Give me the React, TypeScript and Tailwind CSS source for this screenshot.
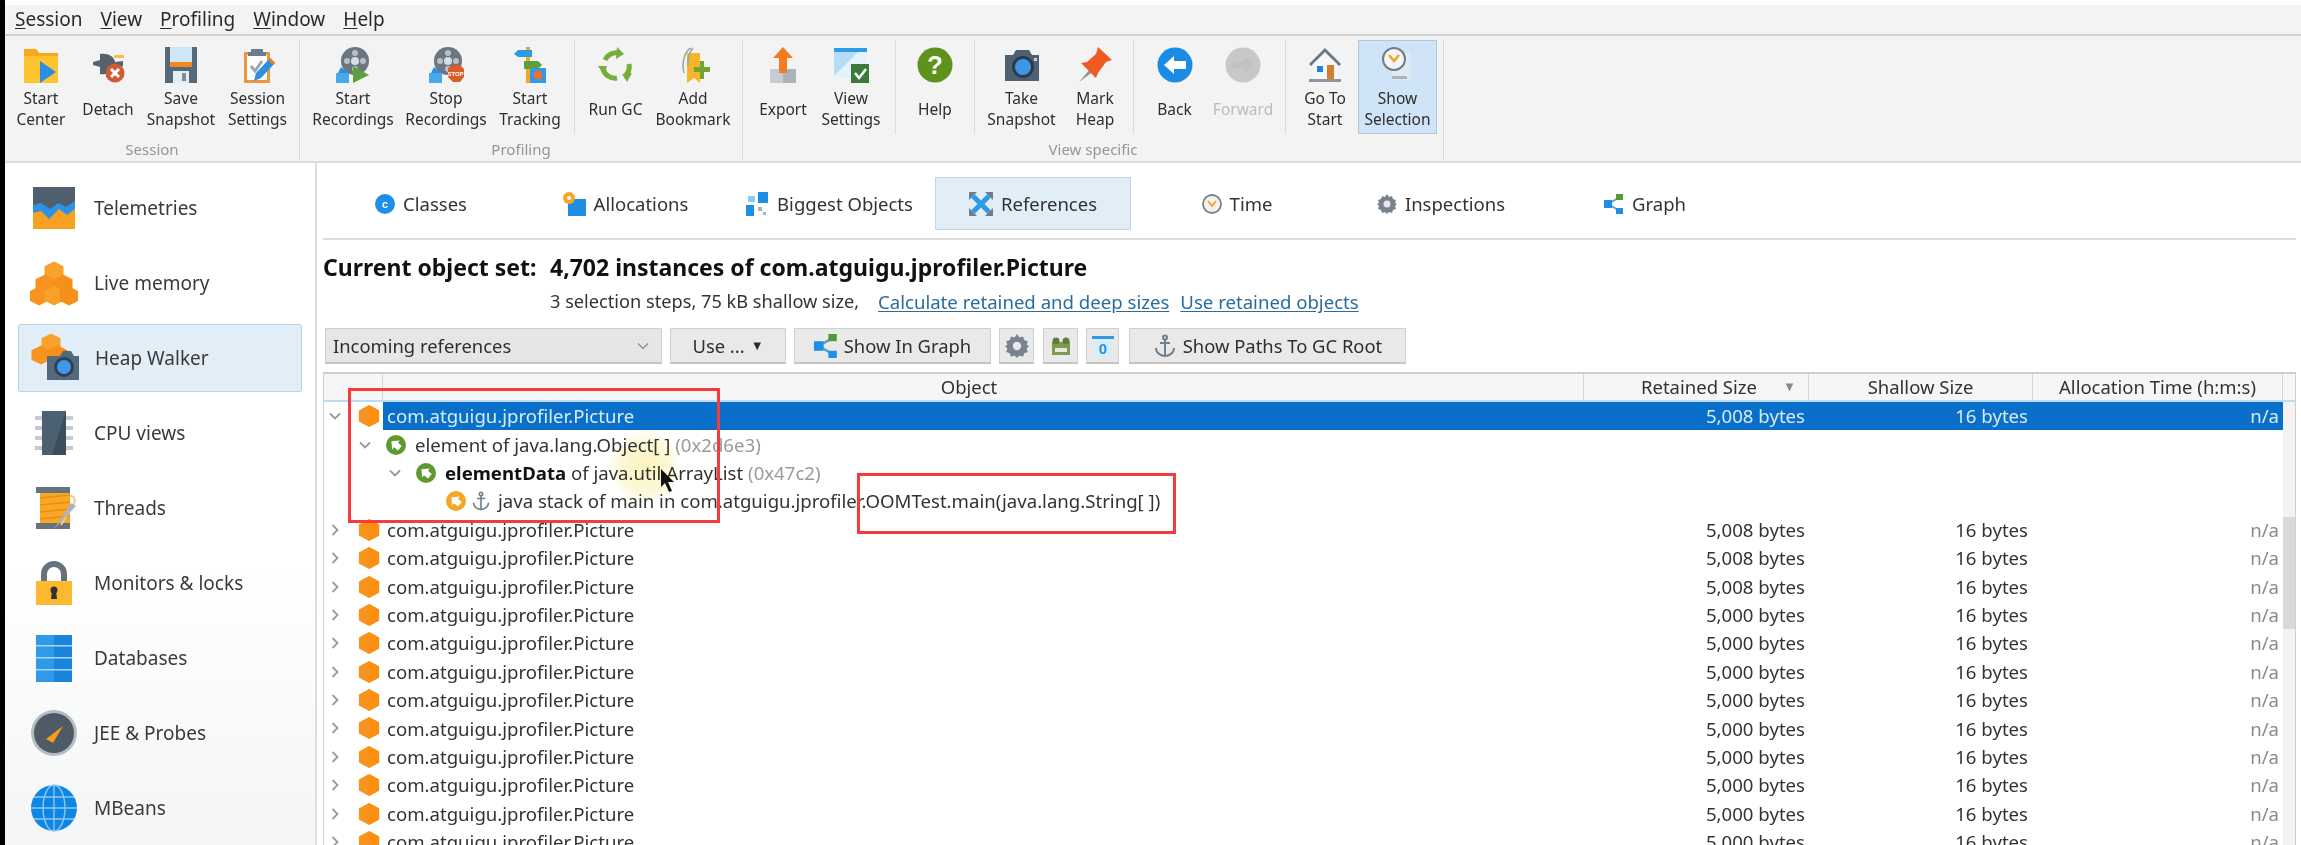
import React from "react";

type P = { className?: string };
const S = ({ className = "w-9 h-9", v = 36, children }: { className?: string; v?: number; children: React.ReactNode }) => (
  <svg viewBox={`0 0 ${v} ${v}`} className={className + " shrink-0"}>{children}</svg>
);

/* ---------- toolbar icons ---------- */
const StartCenter = () => (
  <S>
    <path d="M1 2h12l3 4h19v30H1z" fill="#fdc42f" />
    <path d="M1 2h12l3 4h19v3H1z" fill="#f7a71c" />
    <path d="M17 14l16 11-16 11z" fill="#2a8fe2" />
  </S>
);
const Detach = () => (
  <S>
    <path d="M3 15l7-2V7c8-1 14 2 15 8l8-1v5l-8 1c-1 5-7 8-15 7v-7l-7-2z" fill="#56636f" />
    <path d="M24 8h10v3H24z" fill="#f5c04a" />
    <circle cx="25" cy="26" r="9.5" fill="#cf5b32" />
    <path d="M21 22l8 8M29 22l-8 8" stroke="#fff" strokeWidth="3" />
  </S>
);
const Save = () => (
  <S>
    <path d="M2 0h32v36H2z" fill="#54697c" />
    <path d="M7 0h22v17H7z" fill="#cfe6f8" />
    <path d="M7 15h22v5H7z" fill="#f08a1d" />
    <path d="M10 24h16v12H10z" fill="#e6edf2" />
    <path d="M19 26h4v8h-4z" fill="#7d8d9b" />
  </S>
);
const SessionSettings = () => (
  <S>
    <path d="M4 5h26v31H4z" fill="#e8973e" />
    <path d="M7 8h20v25H7z" fill="#fff" />
    <path d="M11 2h12v3h3v4H8V5h3z" fill="#6b7c8c" />
    <path d="M11 19l4 5 7-10" stroke="#9aa5ae" strokeWidth="3" fill="none" />
    <path d="M30 11l5 5-14 15-7 3 2-8z" fill="#2a8fe2" />
    <path d="M30 11l5 5-2 2-5-5z" fill="#ef7b2a" />
  </S>
);
const Reel = ({ children }: { children: React.ReactNode }) => (
  <S>
    <circle cx="20" cy="14" r="14" fill="#6c7680" />
    <circle cx="20" cy="14" r="4" fill="#d7dde2" />
    <circle cx="20" cy="6" r="3" fill="#b8c0c7" />
    <circle cx="20" cy="22" r="3" fill="#b8c0c7" />
    <circle cx="12" cy="14" r="3" fill="#b8c0c7" />
    <circle cx="28" cy="14" r="3" fill="#b8c0c7" />
    <path d="M1 26h13v10H1z" fill="#4aa8ea" />
    <path d="M6 20l7 6H3z" fill="#2a8fe2" />
    {children}
  </S>
);
const Tracking = () => (
  <S>
    <path d="M14 0h4v36h-4z" fill="#f4a626" />
    <path d="M2 7l4-4h14v7H6z" fill="#2f9ae8" />
    <path d="M12 14h14l4 4-4 4H12z" fill="#5d9f3a" />
    <path d="M18 21h16v15H18z" fill="#2f9ae8" />
    <circle cx="26" cy="28" r="4.5" fill="#e9713a" />
  </S>
);
const RunGC = () => (
  <S>
    <g fill="none" stroke="#76ad3b" strokeWidth="5">
      <path d="M7 13a12.5 12.5 0 0 1 14-7" />
      <path d="M31 17a12.5 12.5 0 0 1-3 11" />
      <path d="M19 31A12.5 12.5 0 0 1 5 22" />
    </g>
    <path d="M19 0l7 7-8 5zM34 26l-10 1 5 8zM0 19l9 0 -3 9z" fill="#76ad3b" />
  </S>
);
const Bookmark = () => (
  <S>
    <path d="M12 6h13v30l-6-5-7 5z" fill="#f9b42a" />
    <path d="M16 1C11 3 6 14 9 26M18 1c-3 3-6 10-5 18" stroke="#9aa3aa" strokeWidth="1.5" fill="none" />
    <path d="M22 20h6v-6h4v6h6v5h-6v7h-4v-7h-6z" fill="#6fa535" transform="translate(-3 0)" />
  </S>
);
const Export = () => (
  <S>
    <path d="M5 22h26v14H5z" fill="#c5ccd2" />
    <path d="M18 22h13v14H18z" fill="#a9b3bb" />
    <path d="M18 0l10 11h-6v15h-8V11H8z" fill="#f47b20" />
  </S>
);
const ViewSettings = () => (
  <S>
    <path d="M1 1h33v30H1z" fill="#e4f2fc" />
    <path d="M1 1h33v4H1z" fill="#2f9ae8" />
    <path d="M1 5l0 24 24-24z" fill="#b4dcf6" />
    <path d="M18 17h18v19H18z" fill="#3d7a3a" />
    <path d="M22 26l4 5 7-9" stroke="#fff" strokeWidth="2.5" fill="none" />
  </S>
);
const Help = () => (
  <S>
    <circle cx="18" cy="18" r="17.5" fill="#5f911d" />
    <text x="18" y="27" textAnchor="middle" fontSize="26" fontWeight="700" fill="#fff" fontFamily="Liberation Sans">?</text>
  </S>
);
const Camera = ({ className = "w-9 h-9" }: P) => (
  <S className={className}>
    <path d="M12 3h13l3 5h7v26H1V8h8z" fill="#4d6173" />
    <circle cx="19" cy="20" r="11" fill="#2b3b49" />
    <circle cx="19" cy="20" r="8" fill="#3d97e6" />
    <path d="M30 11h3v3h-3z" fill="#c9d3da" />
  </S>
);
const Pin = () => (
  <S>
    <path d="M2 35l12-14 3 3z" fill="#8b949c" />
    <path d="M21 0l14 13-6 2-8 11-2 5L4 16l6-1 9-8z" fill="#ee5a1f" />
  </S>
);
const Back = () => (
  <S>
    <circle cx="18" cy="18" r="17.5" fill="#1b8ce6" />
    <path d="M7 18l10-9v5h12v8H17v5z" fill="#fff" />
  </S>
);
const Forward = () => (
  <S>
    <circle cx="18" cy="18" r="17.5" fill="#c8c8c8" />
    <path d="M29 18l-10-8v5H8v6h11v5z" fill="#c1c1c1" />
  </S>
);
const Home = () => (
  <S>
    <path d="M2 17L18 1l16 16-2 2L18 5 4 19z" fill="#6a7884" />
    <path d="M6 17L18 6l12 11v15H6z" fill="#f5f7f8" />
    <path d="M10 19h6v6h-6z" fill="#2a7fd0" />
    <path d="M20 18h7v14h-7z" fill="#cf7f2e" />
    <path d="M2 32h32v3H2z" fill="#8b96a0" />
  </S>
);
const ShowSel = () => (
  <S>
    <path d="M12 6h18v27H12z" fill="#dfeaf3" />
    <path d="M12 29h15v3H12z" fill="#a9b5be" />
    <circle cx="14" cy="12" r="11" fill="#f4f4f4" stroke="#6f7d88" strokeWidth="2" />
    <path d="M9 8l5 6 5-6" stroke="#f2a32a" strokeWidth="2.5" fill="none" />
  </S>
);

/* ---------- sidebar icons ---------- */
const Hex = ({ x, y, r = 9.5, c = "#f7931e" }: { x: number; y: number; r?: number; c?: string }) => (
  <polygon points={`${x},${y - r} ${x + r},${y - r / 2} ${x + r},${y + r / 2} ${x},${y + r} ${x - r},${y + r / 2} ${x - r},${y - r / 2}`} fill={c} />
);
const Sb = ({ children }: { children: React.ReactNode }) => <S className="w-12 h-12" v={48}>{children}</S>;
const Telemetries = () => (
  <Sb>
    <path d="M3 3h42v42H3z" fill="#f7a021" />
    <path d="M3 3h42v22l-8 6-8-6-10 10-8-8-8 2z" fill="#2d93e6" />
    <path d="M3 3h42v14l-9 6-8-4-8 6-9-6-8 2z" fill="#4f5f6d" />
  </Sb>
);
const LiveMem = () => (
  <Sb>
    <Hex x={24} y={12} c="#f9a22b" />
    <Hex x={15} y={25} c="#f7931e" />
    <Hex x={33} y={25} c="#f59018" />
    <Hex x={9} y={37} c="#f7931e" />
    <Hex x={24} y={37} c="#f9a22b" />
    <Hex x={39} y={37} c="#f59018" />
  </Sb>
);
const HeapW = () => (
  <Sb>
    <Hex x={20} y={9} c="#f9a22b" />
    <Hex x={10} y={21} c="#f7931e" />
    <Hex x={27} y={21} c="#f59018" />
    <path d="M24 22h5l3-5h8l3 5h5v24H16V22z" fill="#53697c" />
    <circle cx="33" cy="33" r="10" fill="#2f4150" />
    <circle cx="33" cy="33" r="7" fill="#3d97e6" />
  </Sb>
);
const Cpu = () => (
  <Sb>
    <g fill="#c3c9ce">
      <path d="M5 7h38v4H5zM5 17h38v4H5zM5 27h38v4H5zM5 37h38v4H5z" />
    </g>
    <path d="M12 2h24v44H12z" fill="#4b6070" />
    <path d="M36 2v44H22z" fill="#3c4e5c" />
  </Sb>
);
const Spool = () => (
  <Sb>
    <path d="M10 8h30v32H10z" fill="#f9a825" />
    <path d="M10 14l30-3M10 21l30-3M10 28l30-3M10 35l30-3" stroke="#e88f12" strokeWidth="1.5" />
    <path d="M6 3h34v6H6zM6 39h34v6H6z" fill="#66737e" />
    <path d="M40 12c5 0 6 5 3 9l-12 20" stroke="#f6c88a" strokeWidth="2" fill="none" />
    <path d="M46 22l-5-3-17 26z" fill="#a9b3bb" />
  </Sb>
);
const Lock = () => (
  <Sb>
    <path d="M11 24V15a13 13 0 0 1 26 0v9h-6v-9a7 7 0 0 0-14 0v9z" fill="#66737e" />
    <path d="M6 22h36v24H6z" fill="#fcb92d" />
    <circle cx="24" cy="31" r="3.5" fill="#333" />
    <path d="M22 31h4l1 9h-6z" fill="#333" />
  </Sb>
);
const Db = () => (
  <Sb>
    <path d="M6 1h36v47H6z" fill="#2f9ae8" />
    <path d="M24 1h18v47H24z" fill="#1a84da" />
    <path d="M6 11h36v1.5H6zM6 23h36v1.5H6zM6 35h36v1.5H6z" fill="#a8d6f6" />
  </Sb>
);
const Gauge = () => (
  <Sb>
    <circle cx="24" cy="24" r="23" fill="#b5bcc2" />
    <circle cx="24" cy="24" r="20" fill="#4e5a66" />
    <path d="M16 30l17-13-10 17z" fill="#f59e1e" />
  </Sb>
);
const Globe = () => (
  <Sb>
    <circle cx="24" cy="24" r="23" fill="#0f86e4" />
    <g fill="none" stroke="#8cc9f5" strokeWidth="1.4">
      <ellipse cx="24" cy="24" rx="11" ry="23" />
      <path d="M24 1v46M1 24h46M4 13h40M4 35h40" />
    </g>
  </Sb>
);

/* ---------- small icons ---------- */
const Gear = ({ className = "w-5 h-5" }: P) => (
  <S className={className} v={20}>
    <path d="M10 0l2 3 3-1 1 3 3 1-1 3 2 1-2 2 1 3-3 1-1 3-3-1-2 2-2-2-3 1-1-3-3-1 1-3-2-2 2-1-1-3 3-1 1-3 3 1z" fill="#77848f" />
    <circle cx="10" cy="10" r="3.5" fill="#e8e8e8" />
  </S>
);
const GraphIc = ({ className = "w-5 h-5" }: P) => (
  <S className={className} v={20}>
    <path d="M4 10L16 3M4 10l12 7" stroke="#5da0c8" strokeWidth="2" />
    <path d="M0 6h8v8H0z" fill="#1f8fe6" />
    <path d="M12 0h7v6h-7z" fill="#4f9a3a" />
    <path d="M12 14h7v6h-7z" fill="#1f8fe6" />
  </S>
);
const ClockIc = () => (
  <S className="w-5 h-6" v={20}>
    <circle cx="10" cy="10" r="9" fill="#f5f2ea" stroke="#76838e" strokeWidth="1.8" />
    <path d="M6 7l4 5 4-5" stroke="#f2a32a" strokeWidth="2" fill="none" />
  </S>
);
const ClassesIc = () => (
  <S className="w-5 h-5" v={20}>
    <circle cx="10" cy="10" r="10" fill="#1f8fe6" />
    <text x="10" y="14" textAnchor="middle" fontSize="11" fontWeight="700" fill="#fff" fontFamily="Liberation Sans">c</text>
  </S>
);
const AllocIc = () => (
  <S className="w-6 h-6" v={24}>
    <path d="M6 7h18v17H6z" fill="#1f8fe6" />
    <circle cx="7" cy="6" r="6" fill="#f5a623" />
    <circle cx="7" cy="6" r="2" fill="#fff" />
  </S>
);
const BiggestIc = () => (
  <S className="w-6 h-6" v={24}>
    <path d="M13 0h10v11H13zM1 13h8v11H1z" fill="#1f8fe6" />
    <path d="M3 4h7v6H3z" fill="#8cc9f5" />
    <path d="M13 15h4v4h-4zM18 20h3v3h-3z" fill="#a9b3bb" />
  </S>
);
const RefsIc = () => (
  <S className="w-6 h-6" v={24}>
    <path d="M4 4l16 16M20 4L4 20" stroke="#2f9ae8" strokeWidth="5" />
    <path d="M0 0h8l-8 8zM24 0h-8l8 8zM0 24h8l-8-8zM24 24h-8l8-8z" fill="#6b7c8c" />
  </S>
);
const Frog = () => (
  <S className="w-5 h-5" v={20}>
    <path d="M1 6h18v13H1z" fill="#7d9a50" />
    <circle cx="5" cy="5" r="3.5" fill="#5f7c3a" />
    <circle cx="15" cy="5" r="3.5" fill="#5f7c3a" />
    <path d="M4 12h12v4H4z" fill="#e5e9d5" />
  </S>
);
const ZeroIc = () => (
  <S className="w-6 h-6" v={24}>
    <path d="M1 2h22v3H1z" fill="#2f9ae8" />
    <path d="M4 5h16v18H4z" fill="#d9eefb" />
    <text x="12" y="20" textAnchor="middle" fontSize="15" fontWeight="700" fill="#1f8fe6" fontFamily="Liberation Sans">0</text>
  </S>
);
const Anchor = ({ className = "w-5 h-6" }: P) => (
  <S className={className} v={24}>
    <g stroke="#71808c" strokeWidth="2" fill="none">
      <circle cx="12" cy="3.5" r="2" />
      <path d="M12 6v16M7 9h10M3 14c0 5 5 8 9 8s9-3 9-8" />
    </g>
  </S>
);
const HexIc = () => (
  <S className="w-[22px] h-6" v={24}>
    <polygon points="12,0 23,6 23,18 12,24 1,18 1,6" fill="#f7931e" />
    <polygon points="12,0 23,6 23,18 12,24" fill="#fc8f0f" />
  </S>
);
const RefBall = ({ c = "#5e9a2e" }: { c?: string }) => (
  <S className="w-5 h-5" v={20}>
    <circle cx="10" cy="10" r="10" fill={c} />
    <path d="M4 10l6-6v3h5v6h-5v3z" fill="#fff" transform="rotate(40 10 10)" />
  </S>
);
const Chev = ({ open }: { open?: boolean }) => (
  <svg viewBox="0 0 12 12" className="w-3 h-3 shrink-0">
    <path d={open ? "M1 3.5l5 5 5-5" : "M3.5 1l5 5-5 5"} stroke="#9a9a9a" strokeWidth="1.8" fill="none" />
  </svg>
);

/* ---------- toolbar ---------- */
const Btn = ({ w, icon, lines, active, disabled }: { w: string; icon: React.ReactNode; lines: string[]; active?: boolean; disabled?: boolean }) => (
  <div className={`flex flex-col items-center h-[94px] shrink-0 ${w} ${active ? "bg-[#cfe4f7] border border-[#a9c8e4]" : ""}`}>
    <div className="h-[44px] flex items-center justify-center pt-[5px]">{icon}</div>
    <div className={`h-[50px] flex flex-col justify-center text-center leading-[21px] text-[15.5px] whitespace-nowrap ${disabled ? "text-[#bcbcbc]" : "text-[#2e2e2e]"}`}>
      {lines.map((l) => (
        <span key={l}>{l}</span>
      ))}
    </div>
  </div>
);
const Sep = ({ m }: { m: string }) => <div className={`w-px h-[94px] bg-[#dcdcdc] shrink-0 ${m}`} />;
const Group = ({ w, pad, label, children }: { w: string; pad: string; label: string; children: React.ReactNode }) => (
  <div className={`flex flex-col h-[120px] mt-1 border-r border-[#dcdcdc] shrink-0 ${w}`}>
    <div className={`flex h-[94px] ${pad}`}>{children}</div>
    <div className="flex-1 flex items-center justify-center text-[15px] text-[#959595] pt-[4px]">{label}</div>
  </div>
);

const MenuItem = ({ t }: { t: string }) => (
  <span>
    <span className="underline underline-offset-2">{t[0]}</span>
    {t.slice(1)}
  </span>
);

/* ---------- sidebar ---------- */
const sideItems: [string, React.ReactNode][] = [
  ["Telemetries", <Telemetries />],
  ["Live memory", <LiveMem />],
  ["Heap Walker", <HeapW />],
  ["CPU views", <Cpu />],
  ["Threads", <Spool />],
  ["Monitors & locks", <Lock />],
  ["Databases", <Db />],
  ["JEE & Probes", <Gauge />],
  ["MBeans", <Globe />],
];

/* ---------- tabs ---------- */
const tabs: [string, React.ReactNode][] = [
  ["Classes", <ClassesIc />],
  ["Allocations", <AllocIc />],
  ["Biggest Objects", <BiggestIc />],
  ["References", <RefsIc />],
  ["Time", <ClockIc />],
  ["Inspections", <Gear />],
  ["Graph", <GraphIc />],
];

/* ---------- table rows ---------- */
const Row = ({ gutter, obj, sel, ret, sh, al }: { gutter: React.ReactNode; obj: React.ReactNode; sel?: boolean; ret?: string; sh?: string; al?: string }) => (
  <div className="flex h-[28.4px] text-[18.6px] whitespace-nowrap">
    <div className="w-[59px] shrink-0 flex items-center">{gutter}</div>
    <div className={`flex flex-1 items-center ${sel ? "bg-[#0a6fc8] text-[#d6ebfb]" : "text-[#333]"}`}>
      <div className="w-[1201px] shrink-0 flex items-center">{obj}</div>
      <div className="w-[225px] shrink-0 text-right pr-[4px]">{ret}</div>
      <div className="w-[224px] shrink-0 text-right pr-[5px]">{sh}</div>
      <div className={`w-[250px] shrink-0 text-right pr-[4px] ${sel ? "" : "text-[#8a8a8a]"}`}>{al}</div>
    </div>
  </div>
);
const TopGutter = ({ open }: { open?: boolean }) => (
  <>
    <div className="ml-[5px]"><Chev open={open} /></div>
    <div className="ml-[17px]"><HexIc /></div>
  </>
);

const retained = ["5,008", "5,008", "5,008", "5,000", "5,000", "5,000", "5,000", "5,000", "5,000", "5,000", "5,000", "5,000"];

const HdrBtn = ({ w, children }: { w: string; children: React.ReactNode }) => (
  <div className={`h-[36px] shrink-0 flex items-center justify-center gap-[6px] pt-[1px] bg-[#e9e9e9] border border-[#d0d0d0] border-b-2 border-b-[#c4c4c4] text-[18.4px] text-[#2e2e2e] ${w}`}>{children}</div>
);

export default function App() {
  return (
    <div className="relative flex w-[2301px] h-[845px] overflow-hidden bg-white font-['Noto_Sans',sans-serif] text-[#333] blur-[0.4px]">
      <div className="w-[5px] h-full bg-black shrink-0" />
      <div className="flex-1 flex flex-col min-w-0">
        {/* menu */}
        <div className="h-[5px] bg-white shrink-0" />
        <div className="h-[31px] shrink-0 bg-[#f3f3f3] border-b-2 border-[#d2d2d2] flex items-center pl-[10px] gap-[18px] text-[19px] text-[#2a2a2a]">
          {["Session", "View", "Profiling", "Window", "Help"].map((t) => (
            <MenuItem key={t} t={t} />
          ))}
        </div>
        {/* toolbar */}
        <div className="h-[127px] shrink-0 bg-[#f3f3f3] border-b-2 border-[#dadada] flex">
          <Group w="w-[295px]" pad="pl-[3px]" label="Session">
            <Btn w="w-[66px]" icon={<StartCenter />} lines={["Start", "Center"]} />
            <Btn w="w-[68px]" icon={<Detach />} lines={["Detach"]} />
            <Btn w="w-[78px]" icon={<Save />} lines={["Save", "Snapshot"]} />
            <Btn w="w-[75px]" icon={<SessionSettings />} lines={["Session", "Settings"]} />
          </Group>
          <Group w="w-[443px]" pad="pl-[6px]" label="Profiling">
            <Btn w="w-[94px]" icon={<Reel><path d="M18 19l16 9-16 8z" fill="#5d9f3a" /></Reel>} lines={["Start", "Recordings"]} />
            <Btn w="w-[92px]" icon={<Reel><path d="M20 21l6-3h6l4 4v8l-4 5h-7l-5-5z" fill="#df5c2a" /><text x="27.5" y="29" textAnchor="middle" fontSize="6" fontWeight="700" fill="#fff" fontFamily="Liberation Sans">STOP</text></Reel>} lines={["Stop", "Recordings"]} />
            <Btn w="w-[76px]" icon={<Tracking />} lines={["Start", "Tracking"]} />
            <Sep m="ml-[6px]" />
            <Btn w="w-[81px]" icon={<RunGC />} lines={["Run GC"]} />
            <Btn w="w-[74px]" icon={<Bookmark />} lines={["Add", "Bookmark"]} />
          </Group>
          <Group w="w-[701px]" pad="pl-[2px]" label="View specific">
            <Btn w="w-[76px]" icon={<Export />} lines={["Export"]} />
            <Btn w="w-[60px]" icon={<ViewSettings />} lines={["View", "Settings"]} />
            <Sep m="ml-[14px]" />
            <Btn w="w-[78px]" icon={<Help />} lines={["Help"]} />
            <Sep m="" />
            <Btn w="w-[93px]" icon={<Camera />} lines={["Take", "Snapshot"]} />
            <Btn w="w-[54px]" icon={<Pin />} lines={["Mark", "Heap"]} />
            <Sep m="ml-[11px]" />
            <Btn w="w-[81px]" icon={<Back />} lines={["Back"]} />
            <Btn w="w-[56px]" icon={<Forward />} lines={["Forward"]} disabled />
            <Sep m="ml-[14px]" />
            <div className="w-[6px] shrink-0" />
            <Btn w="w-[66px]" icon={<Home />} lines={["Go To", "Start"]} />
            <Btn w="w-[79px]" icon={<ShowSel />} lines={["Show", "Selection"]} active />
          </Group>
        </div>
        {/* body */}
        <div className="flex-1 flex min-h-0">
          {/* sidebar */}
          <div className="w-[312px] shrink-0 border-r-2 border-[#dedede] bg-gradient-to-b from-white from-60% to-[#f4f5f6] pt-[11px] pl-[13px] flex flex-col gap-[7px]">
            {sideItems.map(([t, ic], i) => (
              <div key={t} className={`w-[284px] h-[68px] shrink-0 flex items-center gap-[16px] pl-[12px] text-[19px] text-[#3a3a3a] rounded-[2px] ${i === 2 ? "bg-[#e1edf7] border border-[#bcd3e6]" : ""}`}>
                {ic}
                <span>{t}</span>
              </div>
            ))}
          </div>
          {/* main */}
          <div className="flex-1 min-w-0 flex flex-col pr-[5px]">
            <div className="ml-[6px] pt-[14px] h-[77px] shrink-0 border-b-2 border-[#dcdcdc] flex">
              <div className="flex h-[53px] -ml-[4px]">
                {tabs.map(([t, ic], i) => (
                  <div key={t} className="w-[204px] shrink-0 flex justify-center">
                    <div className={`w-[196px] h-full flex items-center justify-center gap-[8px] text-[18.5px] text-[#333] ${i === 3 ? "bg-[#e1edf7] border border-[#c4d6e6]" : ""}`}>
                      {ic}
                      <span>{t}</span>
                    </div>
                  </div>
                ))}
              </div>
            </div>
            <div className="ml-[6px] flex flex-col">
              <div className="flex h-[26px] mt-[14px] items-center font-bold text-[23px] text-[#111] whitespace-nowrap">
                <span className="w-[227px] shrink-0">Current object set:</span>
                <span>4,702 instances of com.atguigu.jprofiler.Picture</span>
              </div>
              <div className="flex h-[24px] mt-[10px] pl-[227px] items-center text-[18.2px] text-[#333] whitespace-nowrap">
                <span className="w-[328px] shrink-0">3 selection steps, 75 kB shallow size,</span>
                <span className="underline underline-offset-2 text-[#2b6c9e] text-[18.6px]">Calculate retained and deep sizes</span>
                <span className="underline underline-offset-2 text-[#2b6c9e] text-[18.6px] ml-[11px]">Use retained objects</span>
              </div>
              <div className="flex h-[36px] mt-[14px] pl-[2px] whitespace-nowrap">
                <div className="w-[337px] h-[36px] shrink-0 flex items-center justify-between pl-[7px] pr-[12px] pt-[1px] bg-[#e6e6e6] border border-[#d0d0d0] border-b-2 border-b-[#c4c4c4] text-[18.4px] text-[#2e2e2e]">
                  <span>Incoming references</span>
                  <svg viewBox="0 0 12 12" className="w-3 h-3"><path d="M1 3.5l5 5 5-5" stroke="#888" strokeWidth="1.2" fill="none" /></svg>
                </div>
                <HdrBtn w="w-[116px] ml-[8px]">Use ... <span className="text-[13px]">▼</span></HdrBtn>
                <HdrBtn w="w-[197px] ml-[8px]"><GraphIc className="w-6 h-6" />Show In Graph</HdrBtn>
                <HdrBtn w="w-[35px] ml-[8px]"><Gear className="w-6 h-6" /></HdrBtn>
                <HdrBtn w="w-[35px] ml-[9px]"><Frog /></HdrBtn>
                <HdrBtn w="w-[33px] ml-[8px]"><ZeroIc /></HdrBtn>
                <HdrBtn w="w-[277px] ml-[10px]"><Anchor className="w-6 h-7" />Show Paths To GC Root</HdrBtn>
              </div>
            </div>
            {/* table */}
            <div className="ml-[6px] mt-[8px] flex-1 min-h-0 flex flex-col border-t-2 border-l border-r border-[#cfcfcf] overflow-hidden">
              <div className="h-[28px] shrink-0 flex bg-[#f6f6f6] text-[18.5px] text-[#333] border-b-2 border-[#bcdcf3]">
                <div className="w-[59px] shrink-0 h-full border-r border-[#d4d4d4]" />
                <div className="w-[1201px] shrink-0 h-full flex items-center justify-center pr-[28px] border-r border-[#d4d4d4]">Object</div>
                <div className="w-[225px] shrink-0 h-full flex items-center pl-[57px] border-r border-[#d4d4d4] whitespace-nowrap">
                  <span>Retained Size</span>
                  <span className="ml-[26px] text-[13px] text-[#888]">▼</span>
                </div>
                <div className="w-[224px] shrink-0 h-full flex items-center justify-center border-r border-[#d4d4d4] whitespace-nowrap">Shallow Size</div>
                <div className="w-[250px] shrink-0 h-full flex items-center justify-center border-r border-[#d4d4d4] whitespace-nowrap">Allocation Time (h:m:s)</div>
              </div>
              <div className="flex-1 min-h-0 flex">
                <div className="flex-1 min-w-0 overflow-hidden">
                  <Row
                    sel
                    gutter={<TopGutter open />}
                    obj={<span className="pl-[4px]">com.atguigu.jprofiler.Picture</span>}
                    ret="5,008 bytes"
                    sh="16 bytes"
                    al="n/a"
                  />
                  <Row
                    gutter={<div className="ml-[35px]"><Chev open /></div>}
                    obj={
                      <div className="flex items-center pl-[3px] gap-[9px]">
                        <RefBall />
                        <span>element of java.lang.Object[ ] <span className="text-[#9a9a9a]">(0x2d6e3)</span></span>
                      </div>
                    }
                  />
                  <Row
                    gutter={null}
                    obj={
                      <div className="flex items-center pl-[6px]">
                        <Chev open />
                        <div className="ml-[15px]"><RefBall /></div>
                        <span className="ml-[9px]"><b className="text-[#111]">elementData</b> of java.util.ArrayList <span className="text-[#9a9a9a]">(0x47c2)</span></span>
                      </div>
                    }
                  />
                  <Row
                    gutter={null}
                    obj={
                      <div className="flex items-center pl-[63px]">
                        <RefBall c="#f5a623" />
                        <div className="ml-[5px]"><Anchor /></div>
                        <span className="ml-[7px]">java stack of main in com.atguigu.jprofiler.OOMTest.main(java.lang.String[ ])</span>
                      </div>
                    }
                  />
                  {retained.map((r, i) => (
                    <Row
                      key={i}
                      gutter={<TopGutter />}
                      obj={<span className="pl-[4px]">com.atguigu.jprofiler.Picture</span>}
                      ret={`${r} bytes`}
                      sh="16 bytes"
                      al="n/a"
                    />
                  ))}
                </div>
                <div className="w-[12px] shrink-0 bg-[#f3f3f3] pt-[115px]">
                  <div className="h-[112px] bg-[#d9d9d9]" />
                </div>
              </div>
            </div>
          </div>
        </div>
      </div>
      {/* annotations drawn over the screenshot */}
      <div className="absolute left-[609px] top-[431px] w-[72px] h-[72px] rounded-full bg-[radial-gradient(circle,#fbf3bd_0%,#fdf8d8_50%,#ffffff00_72%)] mix-blend-multiply" />
      <div className="absolute left-[348px] top-[388px] w-[372px] h-[135px] border-[3px] border-[#f53b3b]" />
      <div className="absolute left-[857px] top-[473px] w-[319px] h-[61px] border-[3px] border-[#f53b3b]" />
      <svg viewBox="0 0 16 24" className="absolute left-[660px] top-[469px] w-[16px] h-[24px]">
        <path d="M1 0v18l4-4 4 9 3-1-4-9h6z" fill="#111" />
      </svg>
    </div>
  );
}
